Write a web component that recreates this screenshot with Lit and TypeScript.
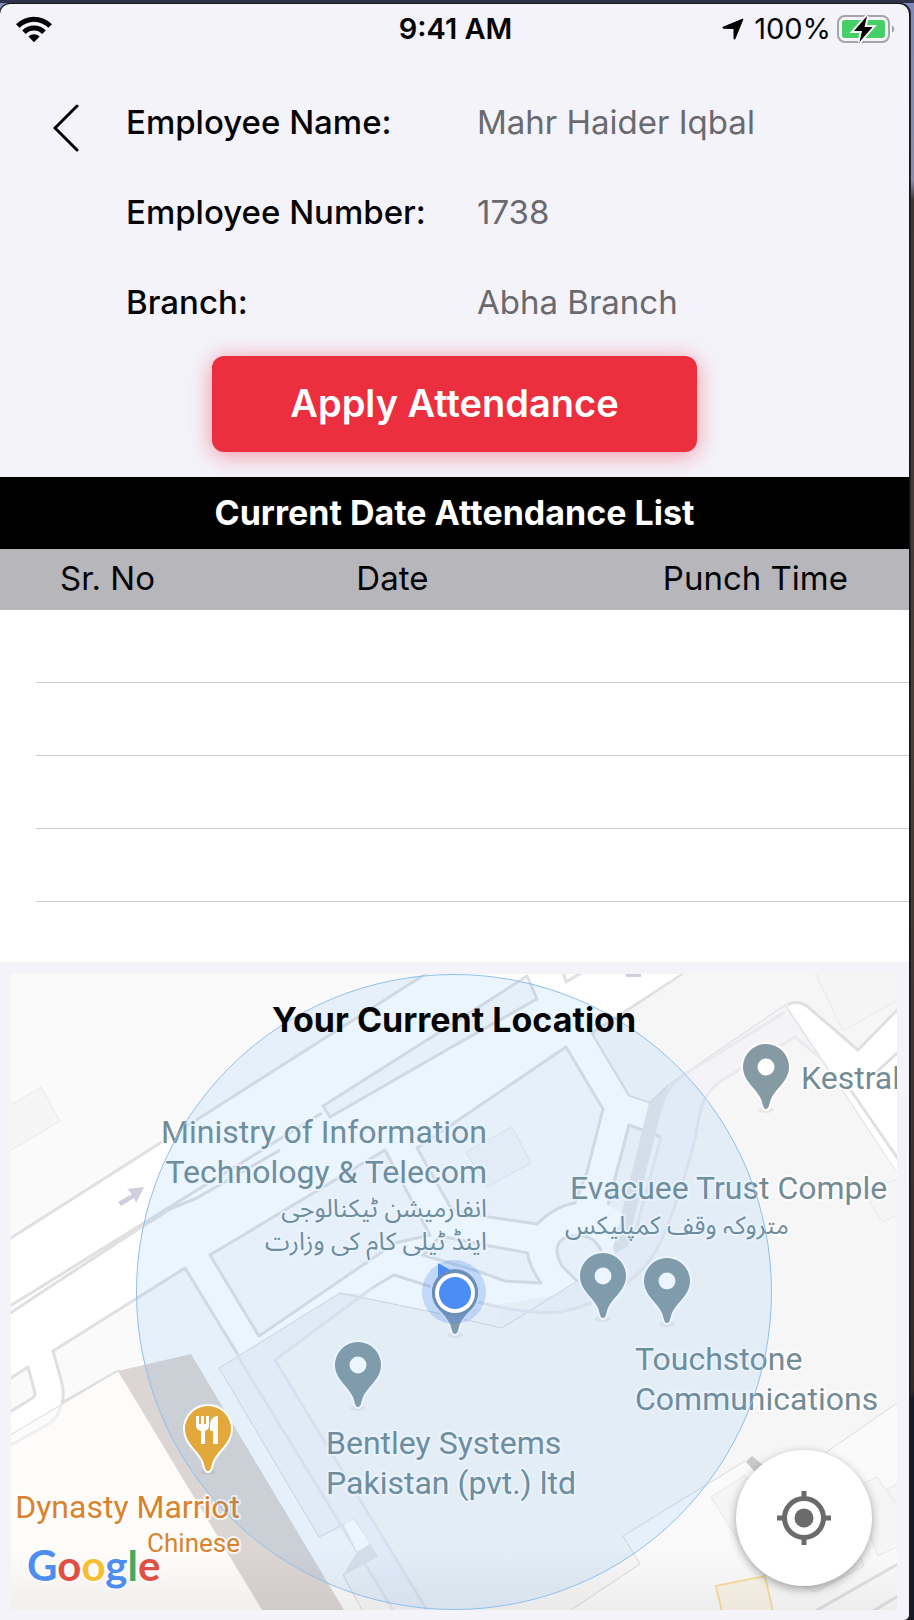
import { LitElement, html, svg, css } from "lit";
import { customElement, property } from "lit/decorators.js";

@customElement("status-bar")
class StatusBar extends LitElement {
  static styles = css`
    :host {
      display: grid;
      grid-template-columns: 1fr auto 1fr;
      align-items: center;
      height: 50px;
      padding: 0 14px 0 16px;
      font-size: 29px;
      line-height: 36px;
    }
    svg {
      display: block;
    }
    .time {
      font-weight: 600;
    }
    .right {
      display: flex;
      align-items: center;
      justify-content: flex-end;
      gap: 6px;
    }
    .arrow {
      margin-right: 4px;
    }
  `;
  render() {
    return html`
      <svg width="36" height="28" viewBox="0 0 36 28" role="img" aria-label="Wi-Fi">
        <path d="M0 9.2a25.500 25.500 0 0 1 36 0l-3.600 3.600a20.400 20.400 0 0 0-28.800 0z" />
        <path d="M6.200 15.400a16.700 16.700 0 0 1 23.600 0l-3.600 3.600a11.600 11.600 0 0 0-16.400 0z" />
        <path d="M12.400 21.600a8 8 0 0 1 11.200 0l-5.600 5.600z" />
      </svg>
      <span class="time">9:41 AM</span>
      <div class="right">
        <svg class="arrow" width="22" height="22" viewBox="0 0 22 22" role="img" aria-label="Location in use">
          <path
            d="M21 1 13 20.800c-.3.600-1 .5-1-.2V10.500L1.500 10.200c-.8 0-1-.8-.2-1.100z"
            stroke="#050507"
            stroke-linejoin="round"
          />
        </svg>
        <span>100%</span>
        <svg width="58" height="30" viewBox="0 0 58 30" role="img" aria-label="Battery charging">
          <rect x="1" y="2" width="51" height="26" rx="7" fill="none" stroke="#a3a3a8" stroke-width="2" />
          <rect x="5" y="6" width="43" height="18" rx="3" fill="#46cf67" />
          <path d="M55 11.500c3 1 3 6 0 7z" fill="#a3a3a8" />
          <path
            d="M30 2 17 17H25l-2.500 11L35.500 13H27.500z"
            fill="#000"
            stroke="#f4f3fa"
            stroke-width="4"
            paint-order="stroke"
          />
        </svg>
      </div>
    `;
  }
}

type Label = { x: number; y: number; text: string; anchor?: string; kind?: string };

@customElement("location-map")
class LocationMap extends LitElement {
  static styles = css`
    :host {
      display: grid;
      position: relative;
      overflow: hidden;
      min-height: 636px;
    }
    .map {
      position: absolute;
      width: 100%;
      height: 100%;
    }
    .title {
      position: relative;
      justify-self: center;
      align-self: start;
      margin: 0;
      padding-top: 24px;
      font-size: 34px;
      line-height: 44px;
      font-weight: 700;
    }
    .locate {
      position: absolute;
      right: 25px;
      bottom: 24px;
      width: 136px;
      height: 136px;
      padding: 0;
      display: grid;
      place-items: center;
      border: 0;
      border-radius: 50%;
      background: #fff;
      box-shadow: 0 3px 10px rgba(0, 0, 0, 0.35);
      cursor: pointer;
    }
    .land {
      fill: #fafafb;
      stroke: #e0e0e3;
      stroke-width: 3;
      stroke-linejoin: round;
    }
    .block {
      fill: #f6f6f7;
    }
    .building {
      fill: #f5f5f6;
      stroke: #e8e8ea;
      stroke-width: 1;
    }
    .road {
      fill: #fff;
    }
    .path {
      fill: #f4f3f8;
    }
    .edge {
      fill: none;
      stroke: #e0e0e3;
      stroke-width: 3;
      stroke-linejoin: round;
    }
    .faint {
      fill: none;
      stroke: #e9e9ee;
      stroke-width: 3;
    }
    .thin {
      fill: none;
      stroke: #d9d9da;
      stroke-width: 1;
    }
    .shade {
      fill: #e6e6ea;
    }
    .hotel {
      fill: #fdfcfa;
    }
    .yard {
      fill: #fafafb;
    }
    .wall {
      fill: #dbd5d3;
    }
    .place {
      font: 400 32px Roboto, sans-serif;
      fill: #738b95;
      stroke: rgba(255, 255, 255, 0.8);
      stroke-width: 4px;
      stroke-linejoin: round;
      paint-order: stroke;
    }
    .urdu {
      font: 400 25px "Noto Sans Arabic", "Noto Sans", "DejaVu Sans", sans-serif;
      direction: rtl;
    }
    .food {
      fill: #d9832c;
    }
    .small {
      font-size: 26px;
    }
    .pin {
      fill: #869aa3;
      stroke: #fff;
      stroke-width: 4;
      paint-order: stroke;
    }
    .pin-food {
      fill: #e3a83c;
    }
    .hole {
      fill: #fff;
    }
    .radius {
      fill: rgba(70, 165, 250, 0.11);
      stroke: #8fc0ee;
      stroke-width: 1;
    }
    .logo {
      font: 700 42px Lato, sans-serif;
      stroke: rgba(255, 255, 255, 0.8);
      stroke-width: 3px;
      paint-order: stroke;
    }
    .b {
      fill: #4e8df0;
    }
    .r {
      fill: #e04f43;
    }
    .y {
      fill: #f4bf31;
    }
    .g {
      fill: #46a961;
    }
  `;

  @property({ attribute: false }) labels: Label[] = [
    { x: 487, y: 1143, text: "Ministry of Information", anchor: "end" },
    { x: 487, y: 1183, text: "Technology & Telecom", anchor: "end" },
    { x: 487, y: 1217, text: "انفارمیشن ٹیکنالوجی", anchor: "start", kind: "urdu" },
    { x: 487, y: 1250, text: "اینڈ ٹیلی کام کی وزارت", anchor: "start", kind: "urdu" },
    { x: 570, y: 1199, text: "Evacuee Trust Comple" },
    { x: 789, y: 1234, text: "متروکہ وقف کمپلیکس", anchor: "start", kind: "urdu" },
    { x: 801, y: 1089, text: "Kestral" },
    { x: 635, y: 1370, text: "Touchstone" },
    { x: 635, y: 1410, text: "Communications" },
    { x: 326, y: 1454, text: "Bentley Systems" },
    { x: 326, y: 1494, text: "Pakistan (pvt.) ltd" },
    { x: 240, y: 1518, text: "Dynasty Marriot", anchor: "end", kind: "food" },
    { x: 240, y: 1552, text: "Chinese", anchor: "end", kind: "food small" },
  ];

  private pin(x: number, y: number, kind = "") {
    return svg`<g transform="translate(${x} ${y})">
      <ellipse cx="0" cy="43" rx="8" ry="3" fill="rgba(0,0,0,.05)"></ellipse>
      <path class="pin ${kind}" d="M0 42C-3 42-3 37-5 32-10 21-23 14-23 0A23 23 0 1 1 23 0C23 14 10 21 5 32 3 37 3 42 0 42z"></path>
      ${kind
        ? svg`<path class="hole" d="M-12-13h3v8h2v-8h3v8h2v-8h3v10c0 3-2 4-4 5v13h-4v-13c-3-1-5-2-5-5zM10-13v28h-5v-13h-3v-6c0-5 3-9 8-9z"></path>`
        : svg`<circle class="hole" r="8.500"></circle>`}
    </g>`;
  }

  render() {
    return html`
      <svg class="map" viewBox="11 974 886 636" preserveAspectRatio="xMidYMid slice" role="img" aria-label="Map of your current location">
        <defs>
          <linearGradient id="fade" x1="0" y1="0" x2="0" y2="1">
            <stop offset="0" stop-color="#000" stop-opacity="0" />
            <stop offset="1" stop-color="#000" stop-opacity="0.05" />
          </linearGradient>
        </defs>
        <rect class="road" x="11" y="974" width="886" height="636" />

        <path class="land" d="M0 966H438L0 1245z" />
        <path class="building" d="M0 1111 41 1087 60 1121 0 1157z" />
        <path class="land" d="M323 1106 457 1021 527 976 537 999 457 1044 330 1117z" />
        <path class="edge" d="M0 1312 36 1290 147 1221 283 1137 322 1113M0 1320 45 1290 140 1228 172 1208 197 1198 280 1150" />
        <path class="edge" d="M562 968 566 982 586 970" />

        <path class="land" d="M683 974 592 1033 629 1095 668 1108 655 1150 640 1210 600 1300 480 1330 500 1620H910V966H696z" />
        <path class="block" d="M594 1035 684 974H897V1610H470V1310L585 1290 620 1230 668 1108 630 1095z" />
        <path class="path" d="M668 1085 785 1005 897 1172V1120L795 1037 722 1080C700 1096 700 1112 696 1135 685 1180 668 1230 655 1252 640 1280 600 1305 560 1312 530 1314 515 1312 502 1328L590 1273 615 1250 635 1215z" />
        <path class="road" d="M629 1125 608 1210 590 1235 604 1262 618 1250 640 1210 661 1137z" />
        <path class="block" d="M629 1125 661 1137 640 1225 625 1215 608 1205z" />
        <path class="edge" d="M608 1205 629 1125 661 1137" />
        <path class="faint" d="M661 1137 636 1230" />
        <path class="land" d="M417 1148 566 1047 603 1109 587 1172 575 1203Q555 1206 537 1224L489 1217 452 1210z" />
        <path class="building" d="M466 1152 512 1127 531 1163 487 1187z" />
        <path class="land" d="M385 1150 210 1255 259 1336 395 1243 430 1235z" />
        <path class="land" d="M440 1236 490 1246 528 1253Q528 1264 541 1283L505 1281 480 1272 423 1255z" />
        <path class="land" d="M578 1282 562 1266C552 1248 558 1238 572 1236 590 1234 598 1240 604 1258L600 1272z" />

        <path class="land" d="M185 1268 53 1351C60 1377 66 1390 62 1403L118 1371 340 1640H411L240 1358z" />
        <path class="land" d="M0 1385 28 1367 35 1393Q35 1397 31 1399L0 1418z" />
        <path class="block" d="M219 1368 340 1293 437 1313 502 1328 580 1280 640 1280 720 1460 571 1610H362L343 1575 377 1556 354 1519 319 1537z" />
        <path class="path" d="M219 1368 340 1293 368 1294 275 1360 427 1610H393L343 1528 319 1537z" />
        <path class="path" d="M497 1308C530 1314 545 1314 560 1312 600 1305 630 1290 645 1260L600 1268 502 1328z" />
        <path class="thin" d="M362 1610 343 1575 377 1556 354 1519 319 1537 219 1368 340 1293 437 1313 502 1328 590 1273" />
        <path class="edge" d="M372 1288 394 1275 432 1287" />
        <path class="faint" d="M372 1288 275 1360 427 1610M237 1355 393 1610M478 1302C500 1308 530 1314 560 1312 600 1305 640 1280 655 1252" />
        <path class="road" d="M344 1524 354 1519 370 1544 357 1552z" />
        <path class="shade" d="M357 1552 370 1544 377 1556 343 1575z" />
        <path class="hotel" d="M0 1441 118 1371 262 1610V1620H0z" />
        <path class="faint" d="M0 1451 45 1426Q59 1418 61 1405" opacity=".7" />
        <path class="thin" d="M0 1441 118 1371" />
        <path class="wall" d="M118 1371 191 1354 344 1610V1620H268z" />

        <path class="shade" d="M668 1085 649 1103 630 1180 613 1248 615 1254 628 1246 635 1215 668 1085z" />
        <path class="thin" d="M649 1103 668 1085 785 1005 897 1172" />
        <path class="faint" d="M785 1012 684 1075Q664 1088 661 1110M897 1120 795 1037 722 1080C700 1096 700 1112 696 1135 685 1180 668 1230 655 1252" />
        <path class="road" d="M787 1005Q798 999 808 1007L858 1050 897 1010V1172z" />
        <path class="building" d="M812 966 843 1031 905 996V966z" />
        <path class="edge" d="M787 1005Q798 999 808 1007L858 1050 905 1002M905 1046 870 1078M845 1082 905 1169" />
        <path class="building" d="M862 1190 882 1222 905 1211V1177z" />

        <path class="yard" d="M571 1610 640 1564 623 1536 745 1461 780 1480 897 1403V1610z" />
        <path class="thin" d="M571 1610 640 1564 623 1536 745 1461M825 1453 897 1403" />
        <path d="M746 1462 752 1456 764 1466 757 1474z" fill="#c9c9cb" />
        <path class="building" d="M711 1497 745 1475 775 1525 738 1540z" />
        <path class="building" d="M850 1490 877 1477 903 1515 903 1544 878 1556z" />
        <path class="building" d="M887 1489 905 1480V1515z" />
        <path class="building" d="M770 1570 857 1548 864 1566 815 1592z" />
        <path class="edge" d="M805 1617 905 1560M868 1614 905 1592" />
        <path d="M716 1586 765 1576 773 1612H722z" fill="#faf4e8" stroke="#f6dfa0" stroke-width="2" />
        <path d="M118 1202 132 1194 127 1189 144 1187 136 1203 134 1198 121 1206z" fill="#cfcfdf" />
        <path d="M626 974H641V977H626z" fill="#cfcfdf" />
        <rect x="11" y="1550" width="886" height="60" fill="url(#fade)" />

        ${this.pin(766, 1067)} ${this.pin(603, 1276)} ${this.pin(667, 1281)} ${this.pin(358, 1365)}
        ${this.pin(455, 1292)}
        ${this.labels.map(
          (l) => svg`<text class="place ${l.kind ?? ""}" x=${l.x} y=${l.y} text-anchor=${l.anchor ?? "start"}>${l.text}</text>`
        )}
        <circle class="radius" cx="454" cy="1292" r="317.500" />
        ${this.pin(208, 1429, "pin-food")}
        <circle cx="454" cy="1292" r="32" fill="rgba(66,133,244,.25)" />
        <path d="M438 1263 452 1271 438 1278z" fill="#4c8cf5" />
        <circle cx="455" cy="1293" r="23" fill="#6b8fb5" />
        <circle cx="455" cy="1293" r="20" fill="#fff" />
        <circle cx="455" cy="1293" r="16" fill="#4c8cf5" />
        <text class="logo" x="27" y="1581"><tspan class="b">G</tspan><tspan class="r">o</tspan><tspan class="y">o</tspan><tspan class="b">g</tspan><tspan class="g">l</tspan><tspan class="r">e</tspan></text>
      </svg>
      <h2 class="title">Your Current Location</h2>
      <button class="locate" aria-label="Center on my location">
        <svg width="54" height="54" viewBox="0 0 54 54" fill="none" stroke="#6b6b6b" stroke-width="5">
          <circle cx="27" cy="27" r="19.500" />
          <path d="M27 0v8M27 46v8M0 27h8M46 27h8" />
          <circle cx="27" cy="27" r="9.500" fill="#6b6b6b" stroke="none" />
        </svg>
      </button>
    `;
  }
}

@customElement("app-root")
class AppRoot extends LitElement {
  static styles = css`
    :host {
      display: flex;
      flex-direction: column;
      box-sizing: border-box;
      min-height: 100vh;
      padding: 4px 5px 0 0;
      background: linear-gradient(#2e3149 0 3px, transparent 3px),
        linear-gradient(#7f89bb 0, #8b8bab 180px, #3f3536 200px, #4a3e38 700px, #3b2f2d 1200px, #33292a 1390px, #141826 1400px);
      font-family: Inter, "Liberation Sans", sans-serif;
      color: #050507;
    }
    .screen {
      flex: 1;
      display: flex;
      flex-direction: column;
      border-radius: 10px 10px 5px 0;
      overflow: hidden;
      background: #f4f3fa;
      box-shadow: 0 0 0 1px #15151b, 1px 0 0 1px #222228;
    }
    .profile {
      display: flex;
      align-items: flex-start;
      padding: 46px 40px 0;
    }
    .back {
      flex: none;
      width: 48px;
      height: 56px;
      padding: 0;
      border: 0;
      background: none;
      cursor: pointer;
    }
    .back svg {
      display: block;
      margin: 3px 13px;
    }
    .info {
      flex: 1;
      display: grid;
      grid-template-columns: 351px 1fr;
      row-gap: 46px;
      margin: 0;
      padding-left: 38px;
      font-size: 33px;
      line-height: 44px;
    }
    .term {
      font-weight: 500;
    }
    .value {
      margin: 0;
      color: #6a6a6e;
    }
    .apply {
      align-self: center;
      width: 53.400%;
      height: 96px;
      margin: 32px 0 25px;
      padding: 0 0 2px;
      border: 0;
      border-radius: 12px;
      background: #eb2f3f;
      box-shadow: 0 3px 22px rgba(245, 50, 70, 0.5);
      color: #fff;
      font: 600 38px Inter, "Liberation Sans", sans-serif;
      cursor: pointer;
    }
    .list {
      width: 100%;
      table-layout: fixed;
      border-collapse: collapse;
      background: #fff;
    }
    .caption {
      height: 72px;
      background: #000;
      color: #fff;
      font-size: 34px;
      font-weight: 700;
      line-height: 72px;
      text-align: center;
    }
    .head {
      height: 61px;
      padding: 0 0 4px;
      box-sizing: border-box;
      background: #b7b6bb;
      font-size: 33px;
      font-weight: 400;
      text-align: left;
    }
    .number {
      width: 39.200%;
      padding-left: 60px;
    }
    .punch {
      padding-right: 61px;
      text-align: right;
    }
    .cell {
      height: 73px;
      padding: 0;
      box-sizing: border-box;
      background: linear-gradient(#cdcdcf, #cdcdcf) 36px 100% / 100% 1px no-repeat;
    }
    .last {
      height: 60px;
      background: none;
    }
    .map {
      flex: 1;
      margin: 12px 12px 10px 11px;
    }
  `;

  @property({ attribute: false }) employee = [
    ["Employee Name:", "Mahr Haider Iqbal"],
    ["Employee Number:", "1738"],
    ["Branch:", "Abha Branch"],
  ];

  render() {
    return html`
      <main class="screen">
        <status-bar></status-bar>
        <section class="profile">
          <button class="back" aria-label="Back">
            <svg width="26" height="48" viewBox="0 0 26 48" fill="none" stroke="#050507" stroke-width="3">
              <path d="M24 2 2 24 24 46" stroke-linecap="round" />
            </svg>
          </button>
          <dl class="info">
            ${this.employee.map(([term, value]) => html`<dt class="term">${term}</dt><dd class="value">${value}</dd>`)}
          </dl>
        </section>
        <button class="apply">Apply Attendance</button>
        <table class="list">
          <caption class="caption">Current Date Attendance List</caption>
          <thead>
            <tr>
              <th class="head number" scope="col">Sr. No</th>
              <th class="head" scope="col">Date</th>
              <th class="head punch" scope="col">Punch Time</th>
            </tr>
          </thead>
          <tbody>
            ${[0, 1, 2, 3, 4].map((i) => html`<tr><td class="cell ${i === 4 ? "last" : ""}" colspan="3"></td></tr>`)}
          </tbody>
        </table>
        <location-map class="map"></location-map>
      </main>
    `;
  }
}
